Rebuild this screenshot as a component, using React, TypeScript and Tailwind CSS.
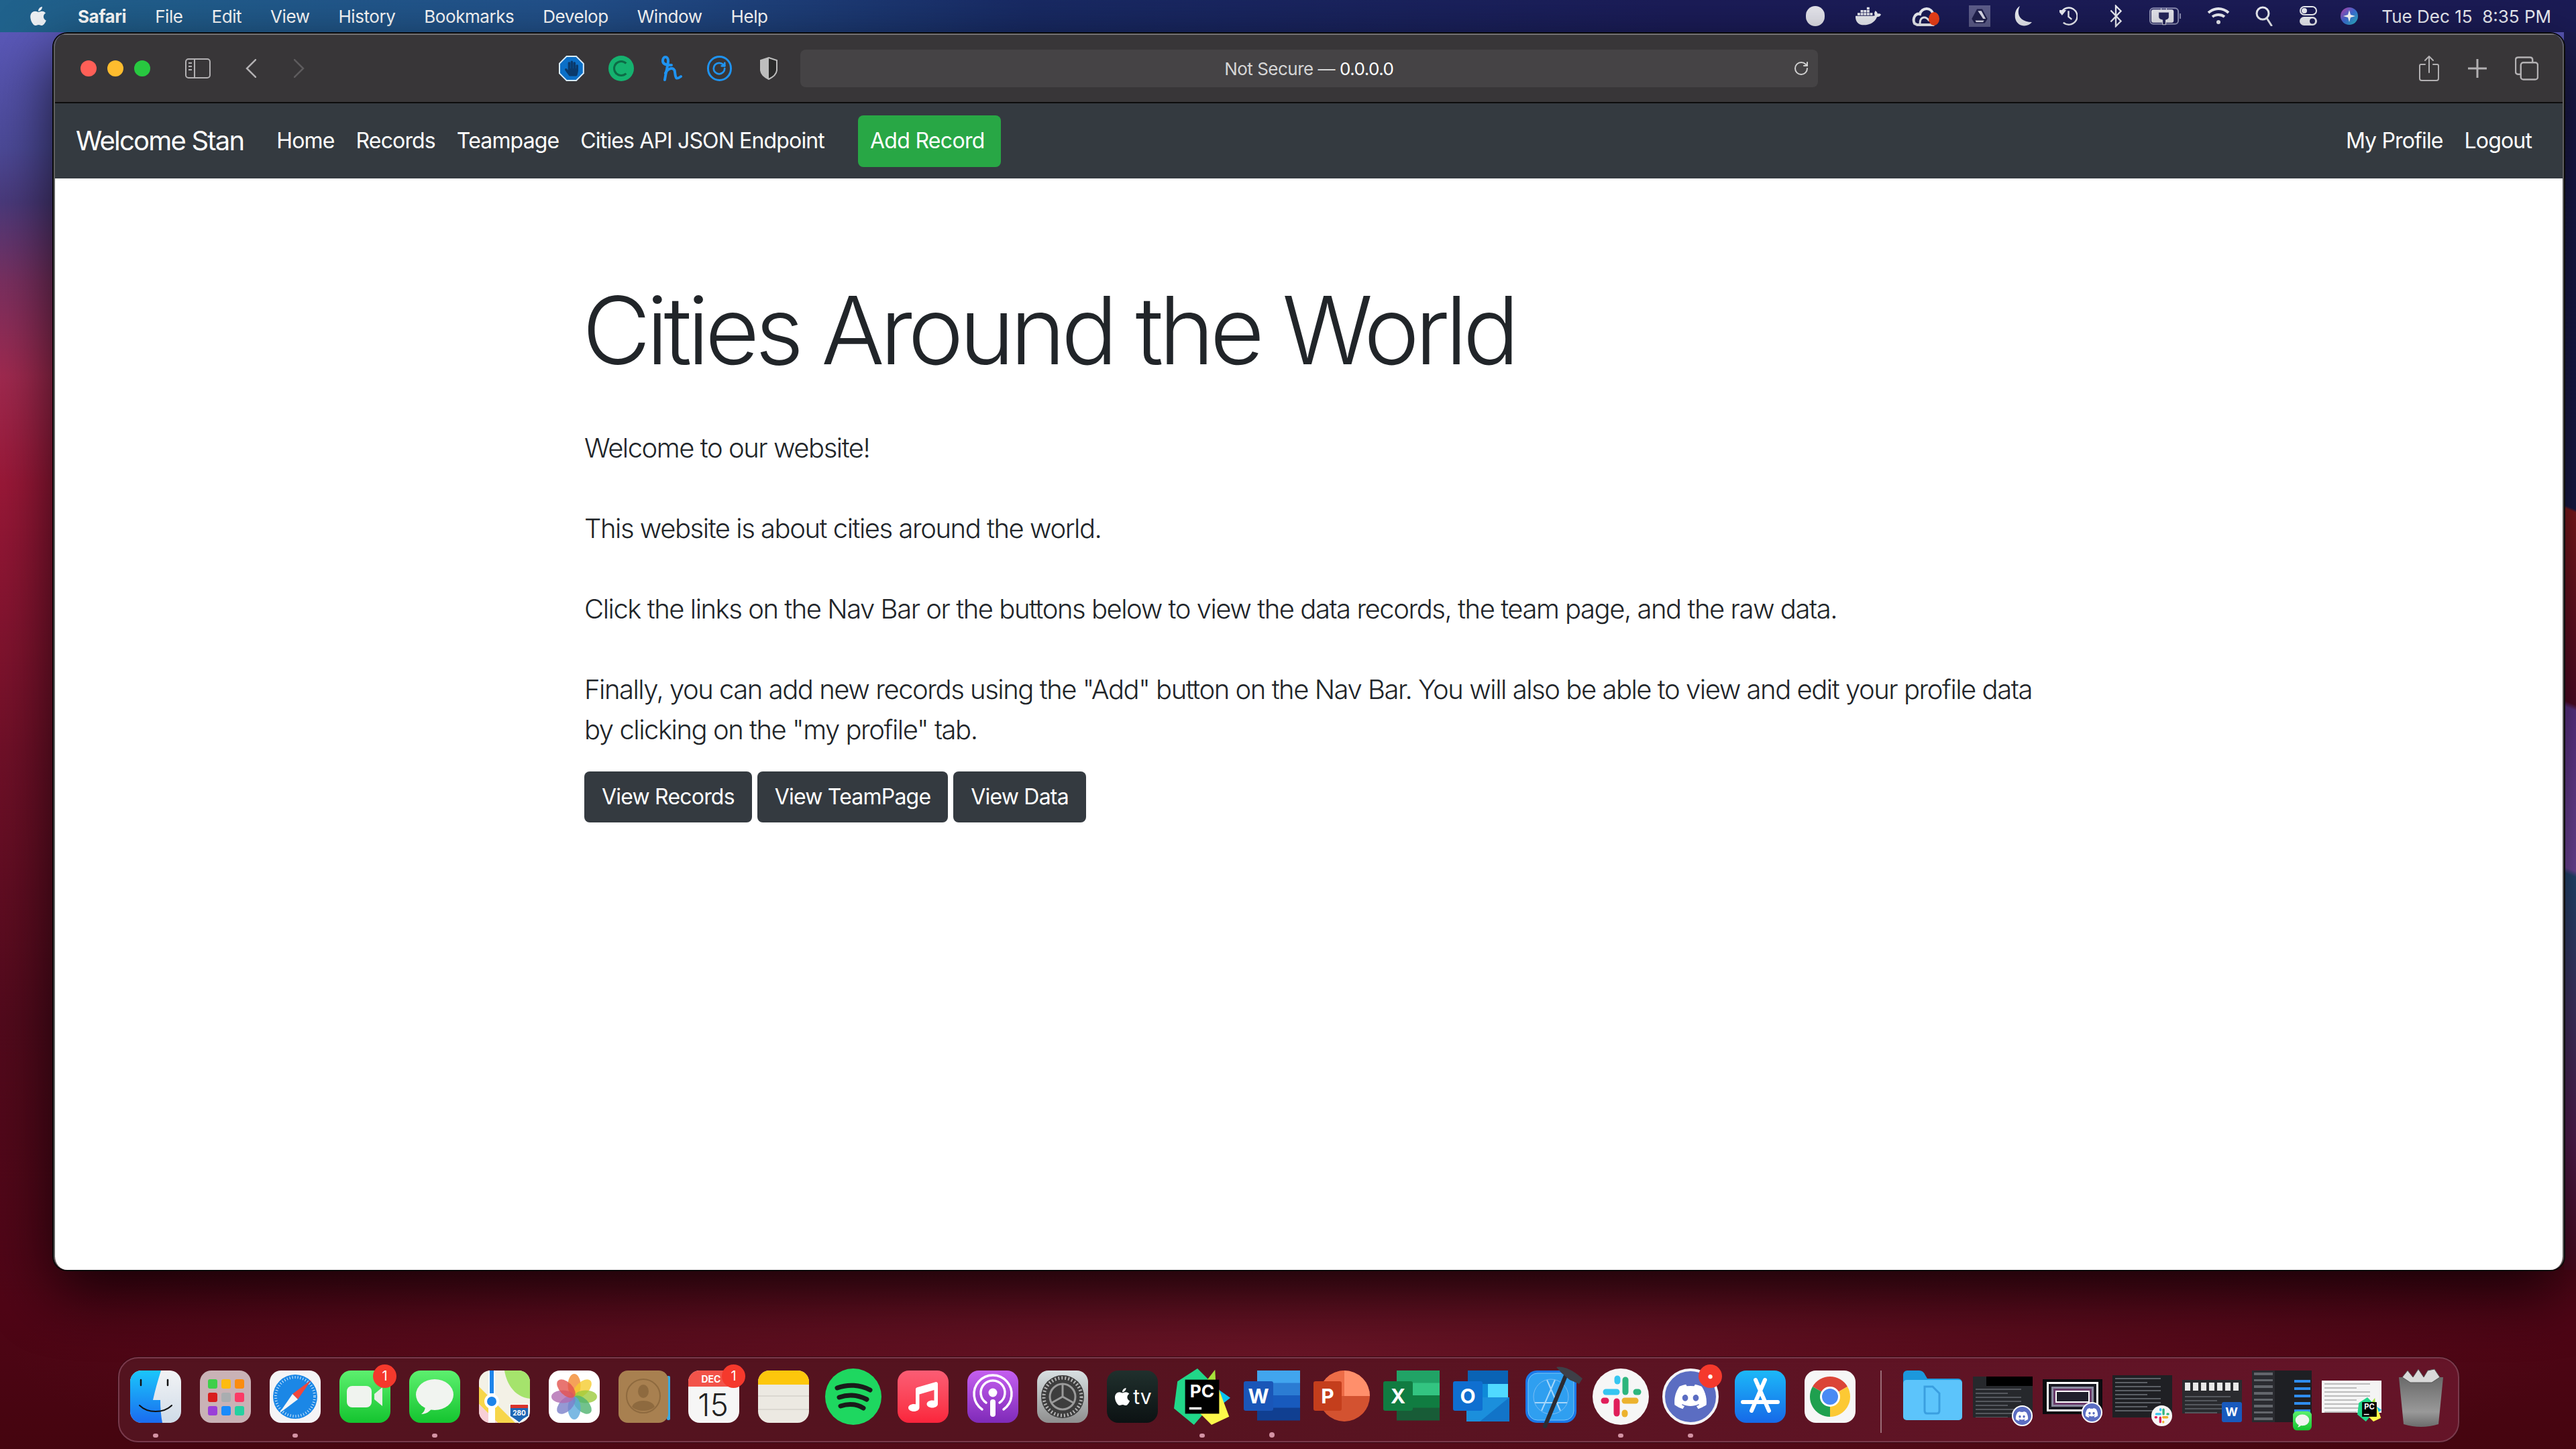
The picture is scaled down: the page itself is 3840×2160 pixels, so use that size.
import React from 'react';
import { FaApple, FaDiscord, FaDocker, FaHandPaper, FaMusic } from 'react-icons/fa';
import { LuRotateCw } from 'react-icons/lu';

type IconProps = { className?: string };

const box = 'w-[76px] h-[78px] overflow-visible';

const Finder = ({ className = box }: IconProps) => (
  <svg viewBox="0 0 76 78" className={className}>
    <defs>
      <linearGradient id="fin" x1="0" y1="0" x2="0" y2="1"><stop offset="0" stopColor="#1bc6fb" /><stop offset="1" stopColor="#1a6bef" /></linearGradient>
      <linearGradient id="fin2" x1="0" y1="0" x2="0" y2="1"><stop offset="0" stopColor="#f2f3f5" /><stop offset="1" stopColor="#cfdbe8" /></linearGradient>
    </defs>
    <rect width="76" height="78" rx="17" fill="url(#fin2)" />
    <path d="M17 0H46C41 16 37 30 34 44H45C45 56 46 68 48 78H17A17 17 0 0 1 0 61V17A17 17 0 0 1 17 0Z" fill="url(#fin)" />
    <path d="M16 14v8M56 14v8" stroke="#111" strokeWidth="2.5" strokeLinecap="round" />
    <path d="M14 52C26 64 50 64 62 52" stroke="#111" strokeWidth="2" fill="none" strokeLinecap="round" />
  </svg>
);

const Launchpad = ({ className = box }: IconProps) => {
  const colors = ['#3ecf4a', '#fdbb11', '#fb8c0f', '#d81e1e', '#a9adb0', '#fb3b66', '#9a3fd8', '#1a8bfb', '#25d0a0'];
  return (
    <svg viewBox="0 0 76 78" className={className}>
      <rect width="76" height="78" rx="17" fill="#c9b2b6" />
      {colors.map((c, i) => (
        <rect key={i} x={12 + (i % 3) * 20} y={13 + Math.floor(i / 3) * 20} width="14" height="14" rx="3" fill={c} />
      ))}
    </svg>
  );
};

const Safari = ({ className = box }: IconProps) => (
  <svg viewBox="0 0 76 78" className={className}>
    <rect width="76" height="78" rx="17" fill="#f4f4f6" />
    <circle cx="38" cy="39" r="33" fill="#1b87e6" />
    <circle cx="38" cy="39" r="29" fill="none" stroke="#d8ecfb" strokeWidth="4" strokeDasharray="1 3" />
    <polygon points="62,14 34,35 42,43" fill="#f0473c" />
    <polygon points="14,64 34,35 42,43" fill="#f6f6f6" />
  </svg>
);

const FaceTime = ({ className = box }: IconProps) => (
  <svg viewBox="0 0 76 78" className={className}>
    <defs><linearGradient id="ft" x1="0" y1="0" x2="0" y2="1"><stop offset="0" stopColor="#5df06f" /><stop offset="1" stopColor="#14c42f" /></linearGradient></defs>
    <rect width="76" height="78" rx="17" fill="url(#ft)" />
    <rect x="11" y="23" width="37" height="32" rx="8" fill="#f0f3ef" />
    <path d="M52 35L64 25V53L52 43Z" fill="#e8eee6" />
  </svg>
);

const Messages = ({ className = box }: IconProps) => (
  <svg viewBox="0 0 76 78" className={className}>
    <defs><linearGradient id="ms" x1="0" y1="0" x2="0" y2="1"><stop offset="0" stopColor="#5df06f" /><stop offset="1" stopColor="#14c42f" /></linearGradient></defs>
    <rect width="76" height="78" rx="17" fill="url(#ms)" />
    <ellipse cx="38" cy="36" rx="28" ry="23" fill="#f1f4f0" />
    <path d="M24 52C24 58 22 62 18 65C25 65 31 61 34 56Z" fill="#f1f4f0" />
  </svg>
);

const Maps = ({ className = box }: IconProps) => (
  <svg viewBox="0 0 76 78" className={className}>
    <rect width="76" height="78" rx="17" fill="#f3f1e6" />
    <path d="M38 0H59A17 17 0 0 1 76 17V42C56 40 42 24 38 0Z" fill="#a5e36c" />
    <path d="M0 24L54 78H28L0 50Z" fill="#f7d64a" />
    <path d="M0 50L28 78H17A17 17 0 0 1 0 61Z" fill="#f8cfd6" />
    <path d="M14 0H24V78H14Z" fill="#fff" />
    <path d="M16 0H22V34H16Z" fill="#1d84ea" />
    <circle cx="19" cy="46" r="11" fill="#fff" />
    <circle cx="19" cy="46" r="7" fill="#1d84ea" />
    <path d="M46 51H74V68Q66 72 60 78Q52 72 46 68Z" fill="#1f67b5" stroke="#fff" strokeWidth="1.5" />
    <rect x="47" y="51" width="26" height="5" fill="#d9342b" />
    <text x="60" y="67" textAnchor="middle" fontSize="10" fontWeight="700" fill="#fff" fontFamily="Inter, sans-serif">280</text>
  </svg>
);

const Photos = ({ className = box }: IconProps) => {
  const petals = ['#f28a30', '#f5cc2e', '#9ccb3c', '#4fb36f', '#5aa7dc', '#7b7fc9', '#b06cb0', '#e2524e'];
  return (
    <svg viewBox="0 0 76 78" className={className}>
      <rect width="76" height="78" rx="17" fill="#fff" />
      {petals.map((c, i) => (
        <ellipse key={i} cx="38" cy="22" rx="9.5" ry="17" fill={c} opacity="0.8" transform={`rotate(${i * 45} 38 39)`} />
      ))}
    </svg>
  );
};

const Contacts = ({ className = box }: IconProps) => (
  <svg viewBox="0 0 76 78" className={className}>
    <rect x="72" y="8" width="5" height="66" rx="2" fill="#3aa9e0" />
    <rect width="74" height="78" rx="14" fill="#a88050" />
    <circle cx="37" cy="38" r="25" fill="none" stroke="#8e6a3f" strokeWidth="2" />
    <ellipse cx="37" cy="31" rx="8" ry="10" fill="#8e6a3f" />
    <path d="M20 54C24 42 50 42 54 54C46 62 28 62 20 54Z" fill="#8e6a3f" />
  </svg>
);

const Calendar = ({ className = box }: IconProps) => (
  <svg viewBox="0 0 76 78" className={className}>
    <rect width="76" height="78" rx="17" fill="#f6f6f6" />
    <path d="M17 0H59A17 17 0 0 1 76 17V24H0V17A17 17 0 0 1 17 0Z" fill="#f2534a" />
    <text x="34" y="18" textAnchor="middle" fontSize="14" fontWeight="700" fill="#fff" fontFamily="Inter, sans-serif">DEC</text>
    <text x="37" y="68" textAnchor="middle" fontSize="46" fontWeight="300" fill="#222" fontFamily="Inter, sans-serif">15</text>
  </svg>
);

const Notes = ({ className = box }: IconProps) => (
  <svg viewBox="0 0 76 78" className={className}>
    <rect width="76" height="78" rx="17" fill="#ece9e2" />
    <path d="M17 0H59A17 17 0 0 1 76 17V21H0V17A17 17 0 0 1 17 0Z" fill="#fdc70c" />
    <path d="M0 38H76M0 58H76" stroke="#d5d2cb" strokeWidth="1.5" />
  </svg>
);

const Spotify = ({ className = 'w-[84px] h-[84px] -mt-[3px]' }: IconProps) => (
  <svg viewBox="0 0 84 84" className={className}>
    <circle cx="42" cy="42" r="42" fill="#1ed760" />
    <path d="M18 29C34 23 52 24 67 32M21 43C35 38 50 40 62 46M23 56C35 52 47 53 57 59" stroke="#1a1a1a" strokeWidth="7" fill="none" strokeLinecap="round" />
  </svg>
);

const Music = ({ className = box }: IconProps) => (
  <div className="w-[76px] h-[78px] rounded-[17px] bg-gradient-to-b from-[#fb5c74] to-[#fa233b] flex items-center justify-center">
    <FaMusic className={className === box ? 'w-[44px] h-[50px] text-white' : className} />
  </div>
);

const Podcasts = ({ className = box }: IconProps) => (
  <svg viewBox="0 0 76 78" className={className}>
    <defs><linearGradient id="pd" x1="0" y1="0" x2="0" y2="1"><stop offset="0" stopColor="#c55ff0" /><stop offset="1" stopColor="#7f2ab8" /></linearGradient></defs>
    <rect width="76" height="78" rx="17" fill="url(#pd)" />
    <path d="M22 58A28 28 0 1 1 54 58M28 48A18 18 0 1 1 48 48" stroke="#fff" strokeWidth="3.5" fill="none" strokeLinecap="round" />
    <circle cx="38" cy="33" r="6.5" fill="#fff" />
    <rect x="34" y="43" width="8" height="26" rx="4" fill="#fff" />
  </svg>
);

const Prefs = ({ className = box }: IconProps) => (
  <svg viewBox="0 0 76 78" className={className}>
    <defs><linearGradient id="pf" x1="0" y1="0" x2="0" y2="1"><stop offset="0" stopColor="#d8e0e2" /><stop offset="1" stopColor="#8f8f8f" /></linearGradient></defs>
    <rect width="76" height="78" rx="17" fill="url(#pf)" />
    <circle cx="38" cy="39" r="32" fill="#3d3d3d" />
    <circle cx="38" cy="39" r="28" fill="none" stroke="#b5b5b5" strokeWidth="5" strokeDasharray="2 3" />
    <circle cx="38" cy="39" r="19" fill="none" stroke="#9a9a9a" strokeWidth="3" />
    <path d="M38 39V21M38 39L54 48M38 39L22 48" stroke="#9a9a9a" strokeWidth="3" />
  </svg>
);

const AppleTv = () => (
  <div className="w-[76px] h-[78px] rounded-[17px] bg-gradient-to-b from-[#20302d] to-[#0c1213] flex items-center justify-center gap-[2px] text-white">
    <FaApple className="w-[28px] h-[30px]" />
    <span className="font-['Inter',sans-serif] text-[30px] font-normal leading-none">tv</span>
  </div>
);

const PyCharm = ({ className = 'w-[96px] h-[96px] -my-[9px]' }: IconProps) => (
  <svg viewBox="0 0 96 96" className={className}>
    <polygon points="62,26 96,50 78,64 62,50" fill="#07c3f2" />
    <polygon points="6,22 40,0 60,20 60,66 34,96 0,68" fill="#21d789" />
    <polygon points="70,2 72,40 36,46" fill="#a7e23a" />
    <polygon points="30,62 76,34 94,82 64,96" fill="#fcf84a" />
    <rect x="19" y="19" width="58" height="58" fill="#000" />
    <text x="48" y="49" textAnchor="middle" fontSize="30" fontWeight="700" fill="#fff" fontFamily="Inter, sans-serif">PC</text>
    <rect x="26" y="66" width="21" height="4" fill="#fff" />
  </svg>
);

const OfficeApp = ({ letter, tile, bands }: { letter: string; tile: string; bands: string[] }) => (
  <svg viewBox="0 0 84 76" className="w-[84px] h-[76px] overflow-visible">
    {bands.map((c, i) => (
      <rect key={i} x="20" y={i * 18.5} width="64" height="19" fill={c} />
    ))}
    <rect x="0" y="16" width="44" height="44" rx="3" fill={tile} />
    <text x="22" y="49" textAnchor="middle" fontSize="30" fontWeight="700" fill="#fff" fontFamily="Inter, sans-serif">{letter}</text>
  </svg>
);

const Word = () => <OfficeApp letter="W" tile="#1a56b8" bands={['#41a5ee', '#2b7cd3', '#185abd', '#103f91']} />;
const Excel = () => <OfficeApp letter="X" tile="#107c41" bands={['#21a366', '#33c481', '#107c41', '#185c37']} />;

const Ppt = () => (
  <svg viewBox="0 0 84 76" className="w-[84px] h-[76px] overflow-visible">
    <circle cx="46" cy="38" r="38" fill="#d35230" />
    <path d="M46 0A38 38 0 0 1 84 38H46Z" fill="#ff8f6b" />
    <path d="M46 0V38H8A38 38 0 0 1 46 0Z" fill="#ed6c47" />
    <rect x="0" y="16" width="42" height="44" rx="3" fill="#c43e1c" />
    <text x="21" y="49" textAnchor="middle" fontSize="30" fontWeight="700" fill="#fff" fontFamily="Inter, sans-serif">P</text>
  </svg>
);

const Outlook = () => (
  <svg viewBox="0 0 84 76" className="w-[84px] h-[76px] overflow-visible">
    <rect x="22" y="0" width="60" height="40" fill="#0a63b5" />
    <rect x="52" y="20" width="30" height="20" fill="#50d9ff" />
    <rect x="22" y="20" width="30" height="20" fill="#0f8ad8" />
    <path d="M20 40H84V76H20Z" fill="#1b8fdc" />
    <path d="M84 40V76H40Z" fill="#1274c8" />
    <rect x="0" y="16" width="44" height="44" rx="3" fill="#0f6fd0" />
    <text x="22" y="49" textAnchor="middle" fontSize="30" fontWeight="700" fill="#fff" fontFamily="Inter, sans-serif">O</text>
  </svg>
);

const Xcode = () => (
  <svg viewBox="0 0 76 78" className={box}>
    <rect width="76" height="78" rx="17" fill="#1a78e8" />
    <rect x="4" y="4" width="68" height="70" rx="14" fill="#2f9ff0" stroke="#7cc8fa" strokeWidth="1" />
    <path d="M24 60L44 14M52 60L32 14M14 48H62" stroke="#a5d6fa" strokeWidth="2" fill="none" />
    <circle cx="38" cy="39" r="26" fill="none" stroke="#79bdf2" strokeWidth="1" />
    <path d="M29 83L61 5" stroke="#2b2c33" strokeWidth="6" strokeLinecap="round" />
    <path d="M46 -5C60 -8 76 4 85 12L80 20L66 14L54 4Z" fill="#3e3f47" />
  </svg>
);

const Slack = ({ className = 'w-[84px] h-[84px] -mt-[3px]' }: IconProps) => (
  <svg viewBox="0 0 84 84" className={className}>
    <circle cx="42" cy="42" r="42" fill="#f6f6f6" />
    <path d="M20 35H36" stroke="#36c5f0" strokeWidth="9" strokeLinecap="round" />
    <path d="M37 15V19" stroke="#36c5f0" strokeWidth="9" strokeLinecap="round" />
    <path d="M49 17V35" stroke="#2eb67d" strokeWidth="9" strokeLinecap="round" />
    <path d="M65 35H68" stroke="#2eb67d" strokeWidth="9" strokeLinecap="round" />
    <path d="M48 48H64" stroke="#ecb22e" strokeWidth="9" strokeLinecap="round" />
    <path d="M48 66V68" stroke="#ecb22e" strokeWidth="9" strokeLinecap="round" />
    <path d="M36 49V67" stroke="#e01e5a" strokeWidth="9" strokeLinecap="round" />
    <path d="M17 48H20" stroke="#e01e5a" strokeWidth="9" strokeLinecap="round" />
  </svg>
);

const Discord = ({ small = false }: { small?: boolean }) => (
  <div className={small ? 'w-[31px] h-[31px] rounded-full bg-[#5b6dc2] border-[2px] border-white flex items-center justify-center' : 'w-[84px] h-[84px] -mt-[3px] rounded-full bg-[#5b6dc2] border-[4px] border-[#f4f4f6] flex items-center justify-center'}>
    <FaDiscord className={small ? 'w-[20px] h-[20px] text-white' : 'w-[52px] h-[52px] text-white'} />
  </div>
);

const AppStore = () => (
  <svg viewBox="0 0 76 78" className={box}>
    <defs><linearGradient id="as" x1="0" y1="0" x2="0" y2="1"><stop offset="0" stopColor="#1cb8f8" /><stop offset="1" stopColor="#1669e8" /></linearGradient></defs>
    <rect width="76" height="78" rx="17" fill="url(#as)" />
    <path d="M45 14L25 60M31 14L51 60M12 47H64" stroke="#fff" strokeWidth="6" strokeLinecap="round" />
  </svg>
);

const Chrome = () => (
  <svg viewBox="0 0 76 78" className={box}>
    <rect width="76" height="78" rx="17" fill="#f6f6f6" />
    <path d="M38 39L12 24A30 30 0 0 1 64 24Z" fill="#db4437" />
    <path d="M38 39L64 24A30 30 0 0 1 38 69Z" fill="#fcc934" />
    <path d="M38 39L38 69A30 30 0 0 1 12 24Z" fill="#1fa04f" />
    <circle cx="38" cy="39" r="15" fill="#fff" />
    <circle cx="38" cy="39" r="12" fill="#4a8af4" />
  </svg>
);

const Folder = () => (
  <svg viewBox="0 0 88 76" className="w-[88px] h-[76px] overflow-visible">
    <path d="M0 6A6 6 0 0 1 6 0H24Q30 0 33 7L36 12H82A6 6 0 0 1 88 18V30H0Z" fill="#1c98dc" />
    <rect y="14" width="88" height="60" rx="5" fill="#5cc4fb" />
    <path d="M32 24H44L54 34V60Q54 64 50 64H36Q32 64 32 60Z" fill="none" stroke="#3a9fe0" strokeWidth="3" />
  </svg>
);

const Trash = () => (
  <svg viewBox="0 0 68 88" className="w-[68px] h-[88px] -mt-[4px]">
    <defs><linearGradient id="tr" x1="0" y1="0" x2="0" y2="1"><stop offset="0" stopColor="#6a6a6a" /><stop offset="0.7" stopColor="#999" /><stop offset="1" stopColor="#6b6b6b" /></linearGradient></defs>
    <path d="M1 14H67L60 84Q34 92 8 84Z" fill="url(#tr)" />
    <path d="M6 14L14 4L22 14L30 2L38 14L44 4L54 2L62 14L50 22H18Z" fill="#d9d9d9" stroke="#555" strokeWidth="1" />
  </svg>
);

// tiny screenshots of minimised windows, just bands of dark and light
const Thumb = ({ top, h, bg, badge, children }: { top: string; h: string; bg: string; badge: React.ReactNode; children?: React.ReactNode }) => (
  <div className={`relative w-[89px] ${top} ${h} ${bg} overflow-visible`}>
    <div className="w-full h-full overflow-hidden">{children}</div>
    <div className="absolute right-0 -bottom-[13px] flex items-center justify-center">{badge}</div>
  </div>
);

const Badge = ({ label }: { label: string }) => (
  <span className="absolute left-[54px] -top-[9px] w-[35px] h-[35px] rounded-full bg-[#f5392c] text-white text-[20px] font-['Inter',sans-serif] leading-[35px] text-center">{label}</span>
);

const thumbLines = Array.from({ length: 9 }, (_, i) => i);

const DarkLines = ({ color }: { color: string }) => (
  <div className="flex flex-col gap-[4px] p-[4px]">
    {thumbLines.map((i) => (
      <div key={i} className={`h-[2px] ${i % 3 === 1 ? 'w-[60%]' : 'w-[85%]'} ${color}`} />
    ))}
  </div>
);

type DockApp = { el: React.ReactNode; running?: boolean; badge?: string };

const apps: DockApp[] = [
  { el: <Finder />, running: true },
  { el: <Launchpad /> },
  { el: <Safari />, running: true },
  { el: <FaceTime />, badge: '1' },
  { el: <Messages />, running: true },
  { el: <Maps /> },
  { el: <Photos /> },
  { el: <Contacts /> },
  { el: <Calendar />, badge: '1' },
  { el: <Notes /> },
  { el: <Spotify /> },
  { el: <Music /> },
  { el: <Podcasts /> },
  { el: <Prefs /> },
  { el: <AppleTv /> },
  { el: <PyCharm />, running: true },
  { el: <Word />, running: true },
  { el: <Ppt /> },
  { el: <Excel /> },
  { el: <Outlook /> },
  { el: <Xcode /> },
  { el: <Slack />, running: true },
  { el: <Discord />, running: true, badge: '•' },
  { el: <AppStore /> },
  { el: <Chrome /> },
];

const Dock = () => (
  <div className="ml-[176px] mt-[130px] w-[3490px] h-[127px] rounded-[30px] border-2 border-[#7a3a4c] bg-[linear-gradient(90deg,#53131f,#55131f_40%,#651428)] pl-[2px] pt-[18px] flex shadow-[0_0_0_1px_#3a0a14]">
    {apps.map((app, i) => (
      <div key={i} className="relative w-[104px] h-[100px] flex flex-col items-center">
        <div className="relative w-[84px] h-[78px] flex justify-center">
          {app.el}
          {app.badge && <Badge label={app.badge} />}
        </div>
        {app.running && <div className="mt-[16px] w-[8px] h-[8px] rounded-full bg-[#d493a4]" />}
      </div>
    ))}
    <div className="w-[2px] h-[93px] ml-[23px] bg-[#9a6b76]" />
    <div className="ml-[24px] w-[104px] flex justify-center"><Folder /></div>
    <div className="w-[104px] flex justify-center">
      <Thumb top="mt-[9px]" h="h-[61px]" bg="bg-[#26282c]" badge={<Discord small />}>
        <div className="ml-[20px] h-[14px] bg-black" />
        <DarkLines color="bg-[#55585e]" />
      </Thumb>
    </div>
    <div className="w-[104px] flex justify-center">
      <Thumb top="mt-[13px]" h="h-[52px]" bg="bg-[#0b0b0f]" badge={<Discord small />}>
        <div className="mx-[6px] my-[4px] h-[44px] border-[3px] border-white bg-[#1a1a24] p-[4px]">
          <div className="h-full border-[3px] border-[#8a8aa0] bg-[#6a3a6a] p-[3px]">
            <div className="h-full border-2 border-white bg-[#20202c]" />
          </div>
        </div>
      </Thumb>
    </div>
    <div className="w-[104px] flex justify-center">
      <Thumb top="mt-[7px]" h="h-[63px]" bg="bg-[#1f2024]" badge={<Slack className="w-[31px] h-[31px]" />}><DarkLines color="bg-[#5c6066]" /></Thumb>
    </div>
    <div className="w-[104px] flex justify-center">
      <Thumb top="mt-[14px]" h="h-[50px]" bg="bg-[#2a2b2f]" badge={<div className="w-[30px] h-[30px] bg-[#185abd] rounded-[3px] text-white text-[18px] font-bold text-center leading-[30px] font-['Inter',sans-serif]">W</div>}>
        <div className="flex gap-[4px] p-[4px]">
          {thumbLines.slice(0, 7).map((i) => (
            <div key={i} className="w-[8px] h-[12px] bg-[#e8e8e8]" />
          ))}
        </div>
        <DarkLines color="bg-[#55585e]" />
      </Thumb>
    </div>
    <div className="w-[104px] flex justify-center">
      <Thumb top="mt-0" h="h-[77px]" bg="bg-[#1e1f23]" badge={<Messages className="w-[28px] h-[30px]" />}>
        <div className="flex justify-between h-full">
          <div className="w-[34px] flex flex-col gap-[6px] p-[3px] bg-[#2a2b30]">
            {thumbLines.slice(0, 8).map((i) => (
              <div key={i} className="h-[4px] bg-[#63666c]" />
            ))}
          </div>
          <div className="flex flex-col items-end gap-[7px] pt-[14px] pr-[2px]">
            {thumbLines.slice(0, 6).map((i) => (
              <div key={i} className="h-[4px] w-[24px] bg-[#2f8df0]" />
            ))}
          </div>
        </div>
      </Thumb>
    </div>
    <div className="w-[104px] flex justify-center">
      <Thumb top="mt-[15px]" h="h-[48px]" bg="bg-[#f4f4f4]" badge={<PyCharm className="w-[36px] h-[36px]" />}><DarkLines color="bg-[#bcbcbc]" /></Thumb>
    </div>
    <div className="w-[104px] flex justify-center"><Trash /></div>
  </div>
);

const MenuBar = () => (
  <div className="h-[48px] flex items-center justify-between bg-[linear-gradient(90deg,#20628c_0%,#22508a_22%,#182a64_40%,#1b1c58_65%,#1b1b55_100%)] text-white text-[26px] font-['Inter',sans-serif] tracking-[-0.45px] pl-[43px] pr-[37px]">
    <div className="flex items-center gap-[43px]">
      <FaApple className="w-[28px] h-[32px] text-[#eef1f5] mr-[2px]" />
      <span className="font-bold">Safari</span>
      <span>File</span>
      <span>Edit</span>
      <span>View</span>
      <span>History</span>
      <span>Bookmarks</span>
      <span>Develop</span>
      <span>Window</span>
      <span>Help</span>
    </div>
    <div className="flex items-center text-[#eef0f6]">
      <div className="w-[28px] h-[30px] rounded-full bg-[#e8e8f0]" />
      <FaDocker className="ml-[46px] w-[38px] h-[34px]" />
      <svg viewBox="0 0 44 30" className="ml-[46px] w-[44px] h-[30px]">
        <path d="M4 26C0 18 6 10 12 12C14 2 30 0 32 14C36 16 38 22 32 28H8Z" fill="none" stroke="#eef0f6" strokeWidth="4" />
        <path d="M12 26C12 16 20 14 26 22" fill="none" stroke="#eef0f6" strokeWidth="3" />
        <ellipse cx="33" cy="19" rx="8" ry="10" fill="#f24118" />
      </svg>
      <div className="ml-[41px] w-[32px] h-[32px] bg-[#5e5e8c] flex items-center justify-center">
        <svg viewBox="0 0 20 20" className="w-[26px] h-[26px]">
          <path d="M7 2H13L19 13L16 18H4L1 13Z" fill="#20204e" />
          <path d="M8 4L12 4L17 13L14 13Z M5 15H15L14 17H6Z" fill="#dcdcec" />
        </svg>
      </div>
      <svg viewBox="0 0 26 30" className="ml-[36px] w-[26px] h-[30px]">
        <path d="M8 0C2 12 8 24 26 24C20 32 4 32 1 18C0 10 2 4 8 0Z" fill="#eef0f6" />
      </svg>
      <svg viewBox="0 0 28 30" className="ml-[41px] w-[27px] h-[30px]" fill="none" stroke="#eef0f6" strokeWidth="2.5">
        <path d="M3 9A13 13 0 1 1 6 25" />
        <path d="M0 7L4 12L8 7Z" fill="#eef0f6" />
        <path d="M14 7V16L19 20" />
      </svg>
      <svg viewBox="0 0 20 36" className="ml-[47px] w-[20px] h-[34px]" fill="none" stroke="#eef0f6" strokeWidth="2.5">
        <path d="M2 9L18 26L10 34V2L18 10L2 27" />
      </svg>
      <svg viewBox="0 0 50 28" className="ml-[40px] w-[49px] h-[28px]">
        <rect x="1" y="2" width="43" height="24" rx="5" fill="none" stroke="#8e90b6" strokeWidth="2" />
        <rect x="3" y="4" width="34" height="20" rx="3" fill="#e8e8f0" />
        <path d="M47 10v8" stroke="#8e90b6" strokeWidth="2" />
        <path d="M18 2V8M26 2V8M14 8H30V15Q30 19 25 20V27H20V20Q14 19 14 15Z" fill="#26265c" stroke="#e8e8f0" strokeWidth="1" />
      </svg>
      <svg viewBox="0 0 34 28" className="ml-[37px] w-[34px] h-[28px]" fill="none" stroke="#eef0f6" strokeWidth="4">
        <path d="M2 9C11 1 23 1 32 9M8 15C13 11 21 11 26 15" />
        <circle cx="17" cy="23" r="3" fill="#eef0f6" stroke="none" />
      </svg>
      <svg viewBox="0 0 26 30" className="ml-[38px] w-[26px] h-[30px]" fill="none" stroke="#eef0f6" strokeWidth="3">
        <circle cx="11" cy="11" r="9" />
        <path d="M17 18L24 29" strokeLinecap="round" />
      </svg>
      <svg viewBox="0 0 26 30" className="ml-[40px] w-[26px] h-[30px]">
        <rect x="1" y="1" width="24" height="12" rx="6" fill="none" stroke="#eef0f6" strokeWidth="2" />
        <circle cx="7" cy="7" r="4" fill="#eef0f6" />
        <rect x="0" y="16" width="26" height="13" rx="6.5" fill="#eef0f6" />
        <circle cx="19" cy="22.5" r="4" fill="#20205a" />
      </svg>
      <svg viewBox="0 0 26 30" className="ml-[35px] w-[26px] h-[30px]">
        <defs><linearGradient id="siri" x1="0" y1="0" x2="1" y2="1"><stop offset="0" stopColor="#c13fa8" /><stop offset="0.5" stopColor="#3c6fd8" /><stop offset="1" stopColor="#2ac4c8" /></linearGradient></defs>
        <circle cx="13" cy="15" r="13" fill="url(#siri)" />
        <path d="M13 6L15 13L22 15L15 17L13 24L11 17L4 15L11 13Z" fill="#fff" />
      </svg>
      <span className="ml-[35px] whitespace-pre tracking-normal">Tue Dec 15  8:35 PM</span>
    </div>
  </div>
);

const Toolbar = () => (
  <div className="h-[104px] shrink-0 flex items-center bg-[#383638] border-t-2 border-b-2 border-t-[#737173] border-b-[#0d0d0d] pl-[38px] pr-[36px] text-[#b3b1b3]">
    <div className="w-[24px] h-[24px] rounded-full bg-[#ff5f57]" />
    <div className="ml-[16px] w-[24px] h-[24px] rounded-full bg-[#febc2e]" />
    <div className="ml-[16px] w-[24px] h-[24px] rounded-full bg-[#28c840]" />
    <svg viewBox="0 0 38 30" className="ml-[52px] w-[38px] h-[30px]" fill="none" stroke="currentColor" strokeWidth="2">
      <rect x="1" y="1" width="36" height="28" rx="4" />
      <path d="M14 1V29" />
      <path d="M5 7H10M5 12H10M5 17H10" />
    </svg>
    <svg viewBox="0 0 16 28" className="ml-[52px] w-[16px] h-[28px]" fill="none" stroke="currentColor" strokeWidth="2.5" strokeLinecap="round">
      <path d="M15 1L2 14L15 27" />
    </svg>
    <svg viewBox="0 0 16 28" className="ml-[56px] w-[16px] h-[28px] text-[#5e5c5e]" fill="none" stroke="currentColor" strokeWidth="2.5" strokeLinecap="round">
      <path d="M1 1L14 14L1 27" />
    </svg>
    {/* extensions */}
    <div className="ml-[379px] w-[38px] h-[38px] bg-[#d9ecfb] [clip-path:polygon(30%_0,70%_0,100%_30%,100%_70%,70%_100%,30%_100%,0_70%,0_30%)] flex items-center justify-center">
      <div className="w-[34px] h-[34px] bg-[#0b6fc7] [clip-path:polygon(30%_0,70%_0,100%_30%,100%_70%,70%_100%,30%_100%,0_70%,0_30%)] flex items-center justify-center">
        <FaHandPaper className="w-[20px] h-[26px] text-[#0a3a6c]" />
      </div>
    </div>
    <div className="ml-[36px] w-[38px] h-[38px] rounded-full bg-[#15b26f] flex items-center justify-center">
      <div className="w-[24px] h-[24px] rounded-full border-[3px] border-[#0d6b46] border-r-[#15b26f]" />
    </div>
    <svg viewBox="0 0 36 38" className="ml-[36px] w-[36px] h-[38px]" fill="none" stroke="#1f93f0" strokeWidth="4" strokeLinecap="round">
      <path d="M10 36C12 22 15 14 15 8C15 0 7 0 7 8C7 13 12 14 20 14" />
      <path d="M11 26C15 18 24 16 25 24C26 32 26 37 34 31" />
    </svg>
    <div className="ml-[37px] w-[37px] h-[38px] rounded-full border-[3px] border-[#1f93f0] flex items-center justify-center">
      <LuRotateCw className="w-[22px] h-[22px] text-[#1f93f0]" strokeWidth={3} />
    </div>
    <svg viewBox="0 0 26 34" className="ml-[42px] w-[26px] h-[34px]">
      <path d="M13 1L25 5V20Q24 28 13 33Q2 28 1 20V5Z" fill="#2a2a2a" stroke="#bdbdbd" strokeWidth="2" />
      <path d="M13 1L1 5V20Q2 28 13 33Z" fill="#bdbdbd" />
    </svg>
    {/* address bar */}
    <div className="ml-[34px] w-[1519px] h-[56px] rounded-[8px] bg-[#454345] flex items-center pr-[13px]">
      <div className="flex-1 flex justify-center text-[26px] font-['Inter',sans-serif] tracking-[-0.5px] pl-[37px]">
        <span className="text-[#d5d5d5]">Not Secure — <span className="text-white">0.0.0.0</span></span>
      </div>
      <LuRotateCw className="w-[24px] h-[26px] text-[#d0d0d0]" />
    </div>
    {/* right side buttons */}
    <svg viewBox="0 0 30 38" className="ml-[896px] w-[30px] h-[38px]" fill="none" stroke="currentColor" strokeWidth="2" strokeLinecap="round">
      <path d="M9 13H3Q1 13 1 15V34Q1 37 4 37H26Q29 37 29 34V15Q29 13 27 13H21M15 25V1M9 7L15 1L21 7" />
    </svg>
    <svg viewBox="0 0 28 28" className="ml-[43px] w-[28px] h-[28px]" stroke="currentColor" strokeWidth="3">
      <path d="M14 0V28M0 14H28" />
    </svg>
    <svg viewBox="0 0 36 36" className="ml-[42px] w-[35px] h-[36px]" fill="none" stroke="currentColor" strokeWidth="2.5">
      <rect x="9" y="9" width="26" height="26" rx="4" />
      <path d="M9 27H5Q1 27 1 23V5Q1 1 5 1H23Q27 1 27 5V9" />
    </svg>
  </div>
);

const NavBar = () => (
  <nav className="h-[112px] shrink-0 flex items-center bg-[#343a40] text-white pl-[31px] pr-[46px] font-['Inter',sans-serif]">
    <span className="text-[40px] tracking-[-1.8px] leading-none">Welcome Stan</span>
    <div className="ml-[49px] flex items-center gap-[32px] text-[32px] tracking-[-0.85px]">
      <span>Home</span>
      <span>Records</span>
      <span>Teampage</span>
      <span>Cities API JSON Endpoint</span>
    </div>
    <div className="ml-[50px] h-[77px] w-[213px] rounded-[8px] bg-[#28a745] flex items-center pl-[18px] text-[32px] tracking-[-0.7px]">Add Record</div>
    <div className="ml-auto flex items-center gap-[32px] text-[32px] tracking-[-0.85px]">
      <span>My Profile</span>
      <span>Logout</span>
    </div>
  </nav>
);

const Page = () => (
  <main className="flex-1 bg-white pl-[789px] pt-[142px] font-['Inter',sans-serif] text-[#212529]">
    <h1 className="-ml-[3px] text-[140px] leading-[168px] font-light tracking-[-6.5px] mb-[62px]">Cities Around the World</h1>
    <p className="w-[2175px] text-[40px] leading-[60px] font-light tracking-[-1.47px] mb-[32px]">
      Welcome to our website!
      <br /><br />
      This website is about cities around the world.
      <br /><br />
      Click the links on the Nav Bar or the buttons below to view the data records, the team page, and the raw data.
      <br /><br />
      Finally, you can add new records using the "Add" button on the Nav Bar. You will also be able to view and edit your profile data by clicking on the "my profile" tab.
    </p>
    <div className="flex gap-[8px] text-white text-[32px] tracking-[-0.8px]">
      <div className="h-[76px] px-[26px] rounded-[8px] bg-[#343a40] flex items-center">View Records</div>
      <div className="h-[76px] px-[26px] rounded-[8px] bg-[#343a40] flex items-center">View TeamPage</div>
      <div className="h-[76px] px-[26px] rounded-[8px] bg-[#343a40] flex items-center">View Data</div>
    </div>
  </main>
);

export default function App() {
  return (
    <div className="w-[3840px] h-[2160px] overflow-hidden flex flex-col bg-[radial-gradient(ellipse_1900px_260px_at_50%_2020px,#661425,transparent),linear-gradient(180deg,#5a58b8_48px,#4c4a98_220px,#4a3a7c_300px,#7a3060_420px,#a02a50_560px,#9a1838_720px,#701028_1120px,#520a1c_1520px,#4f0516_1950px,#45050f_2160px)]">
      <MenuBar />
      <div className="h-[1845px] shrink-0 flex">
        <div className="mt-[2px] ml-[80px] w-[3742px] flex flex-col rounded-[20px] overflow-hidden shadow-[0_0_0_2px_#0a0a0a,0_30px_90px_rgba(0,0,0,0.75)] border-x-2 border-x-[#5f5f5f] relative z-10">
          <Toolbar />
          <NavBar />
          <Page />
        </div>
        <div className="w-[18px] bg-[linear-gradient(202deg,#1c1c50_0px,#1b1b4e_660px,#8e1c20_664px,#5a0a28_930px,#6a3a9a_938px,#8050b0_1160px,#2a5080_1168px,#4a3a70_1350px,#5c2058_1535px,#500a20_1710px)]" />
      </div>
      <Dock />
    </div>
  );
}
